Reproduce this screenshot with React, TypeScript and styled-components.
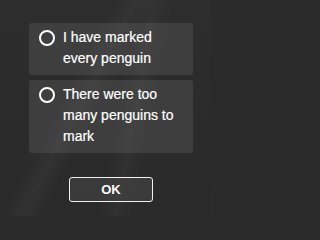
import React from "react";
import styled, { createGlobalStyle } from "styled-components";

const Global = createGlobalStyle`
  html, body { margin: 0; padding: 0; }
  body {
    width: 210px;
    height: 216px;
    overflow: hidden;
    background: #2b2b2b;
    font-family: "Liberation Sans", Arial, Helvetica, sans-serif;
  }
`;

const Page = styled.div`
  width: 210px;
  height: 216px;
  box-sizing: border-box;
  padding: 23px 17px 0 29px;
  background:
    linear-gradient(118deg, rgba(255,255,255,0) 35%, rgba(255,255,255,0.035) 42%, rgba(255,255,255,0) 48%),
    linear-gradient(100deg, rgba(255,255,255,0) 55%, rgba(255,255,255,0.03) 62%, rgba(255,255,255,0) 70%),
    linear-gradient(180deg, #2d2d2d 0%, #2a2a2a 100%);
  display: flex;
  flex-direction: column;
`;

const Options = styled.div`
  display: flex;
  flex-direction: column;
  gap: 5px;
`;

const Option = styled.label`
  display: flex;
  align-items: flex-start;
  gap: 8px;
  padding: 4px 8px 6px 10px;
  background: rgba(110, 110, 110, 0.28);
  border-radius: 3px;
  color: #ffffff;
  font-size: 14px;
  line-height: 21px;
  cursor: pointer;
`;

const Radio = styled.span`
  flex: none;
  box-sizing: border-box;
  width: 16px;
  height: 16px;
  margin-top: 3px;
  border: 2px solid #ffffff;
  border-radius: 50%;
`;

const Label = styled.span`
  -webkit-text-stroke: 0.2px #ffffff;
`;

const Footer = styled.div`
  display: flex;
  justify-content: center;
  padding-top: 24px;
`;

const OkButton = styled.button`
  box-sizing: border-box;
  width: 84px;
  height: 25px;
  border: 1px solid #f2f2f2;
  border-radius: 3px;
  background: rgba(70, 70, 70, 0.6);
  color: #ffffff;
  font-family: "Liberation Sans", Arial, Helvetica, sans-serif;
  font-weight: bold;
  font-size: 13px;
  padding: 0;
  cursor: pointer;
`;

export default function App() {
  return (
    <>
      <Global />
      <Page>
        <Options>
          <Option>
            <Radio />
            <Label>I have marked every penguin</Label>
          </Option>
          <Option>
            <Radio />
            <Label>There were too many penguins to mark</Label>
          </Option>
        </Options>
        <Footer>
          <OkButton>OK</OkButton>
        </Footer>
      </Page>
    </>
  );
}
